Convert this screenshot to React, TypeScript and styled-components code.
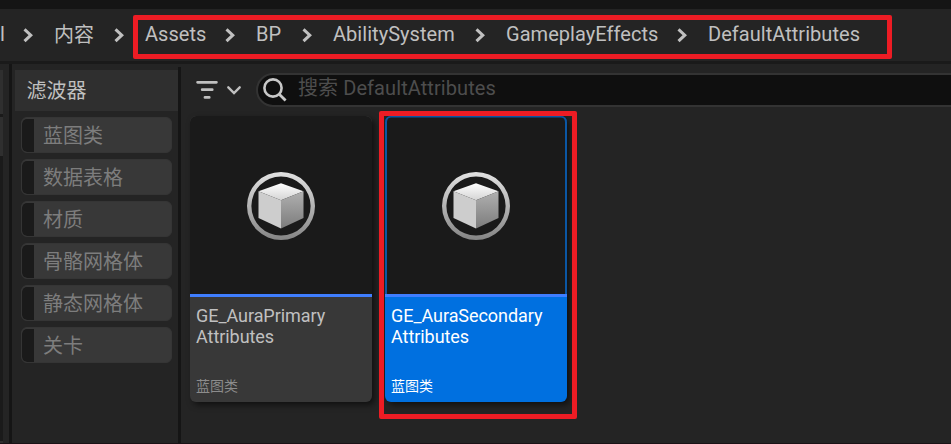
import React from "react";
import styled, { createGlobalStyle } from "styled-components";

const Global = createGlobalStyle`
  *, *::before, *::after { box-sizing: border-box; }
  html, body { margin: 0; background: #242424; overflow: hidden; }
  body { font-family: Roboto, "Noto Sans CJK SC", sans-serif; }
`;

const Window = styled.div`
  position: relative;
  width: 951px;
  height: 444px;
  display: flex;
  flex-direction: column;
  background: #242424;
  color: #c0c0c0;
  border-bottom: 1px solid #1a1216;
  overflow: hidden;
`;

const TitleStrip = styled.div`
  height: 9px;
  flex: none;
  background: #151515;
`;

const Breadcrumbs = styled.nav`
  height: 55px;
  flex: none;
  display: flex;
  align-items: flex-start;
  padding-top: 10px;
  border-bottom: 3px solid #1a1a1a;
  font-size: 20px;
  line-height: 30px;
  white-space: nowrap;
`;

const Crumb = styled.span<{ $w: number; $cjk?: boolean }>`
  flex: none;
  width: ${(p) => p.$w}px;
  padding-top: ${(p) => (p.$cjk ? 1 : 0)}px;
  letter-spacing: ${(p) => (p.$cjk ? 0 : 0.04)}px;
`;

const ChevronBox = styled.svg<{ $gap: number }>`
  flex: none;
  width: 11px;
  height: 15px;
  margin: 9px ${(p) => p.$gap}px 0 0;
  fill: none;
  stroke: #c0c0c0;
  stroke-width: 3;
`;

const Chevron = ({ gap }: { gap: number }) => (
  <ChevronBox viewBox="0 0 11 15" $gap={gap}>
    <path d="M1.5 1.3L7.8 7.2L1.5 13.2" />
  </ChevronBox>
);

const Body = styled.div`
  flex: 1;
  display: flex;
  min-height: 0;
`;

const NeighborPanel = styled.div`
  width: 3px;
  flex: none;
  margin-right: 6px;
  display: flex;
  flex-direction: column;
  background: #1a1a1a;
  border-top: 6px solid #242424;
  border-bottom: 2px solid #2f2f2f;
`;

const NeighborRow = styled.div<{ $h: number }>`
  height: ${(p) => p.$h}px;
  margin-bottom: 3px;
  background: #2f2f2f;
`;

const Divider = styled.div<{ $top?: number }>`
  width: 3px;
  flex: none;
  margin-top: ${(p) => p.$top ?? 0}px;
  background: #151515;
`;

const Filters = styled.aside`
  width: 166px;
  flex: none;
  padding: 6px 0 0 3px;
`;

const FiltersTitle = styled.div`
  height: 41px;
  padding-left: 11.5px;
  background: #2f2f2f;
  font-size: 20px;
  line-height: 43px;
`;

const FilterList = styled.div`
  display: flex;
  flex-direction: column;
  gap: 6px;
  padding: 6px 6px 0;
`;

const FilterChip = styled.button`
  height: 36px;
  display: flex;
  padding: 0;
  border: 1px solid #353535;
  border-radius: 6px;
  background: #383838;
  color: #7d7d7d;
  font: inherit;
  font-size: 20px;
  line-height: 36px;
  text-align: left;
  overflow: hidden;
  &::before {
    content: "";
    width: 12px;
    height: 33px;
    flex: none;
    margin: 1px 9px 0 0;
    border-radius: 5px 0 0 5px;
    background: #1a1a1a;
  }
`;

const Content = styled.main`
  flex: 1;
  min-width: 0;
`;

const SearchBar = styled.div`
  display: flex;
  height: 43px;
  padding-top: 9px;
`;

const FilterIcon = styled.svg`
  width: 60px;
  height: 34px;
  margin-left: 15px;
  flex: none;
  fill: none;
  stroke: #c0c0c0;
  stroke-linecap: round;
`;

const SearchField = styled.div`
  flex: 1;
  height: 34px;
  margin-right: -20px;
  display: flex;
  border: 2px solid #333333;
  border-radius: 17px;
  background: #0f0f0f;
  color: #4d4d4d;
  font-size: 20px;
  letter-spacing: 0.08px;
  line-height: 27px;
  white-space: pre;
`;

const SearchIcon = styled.svg`
  width: 40px;
  height: 30px;
  flex: none;
  fill: none;
  stroke: #c8c8c8;
`;

const AssetGrid = styled.div`
  display: flex;
  gap: 13px;
  padding: 9px 0 0 9px;
`;

const AssetCard = styled.article<{ $selected?: boolean }>`
  width: 182px;
  height: 286px;
  display: flex;
  flex-direction: column;
  border-radius: 6px;
  overflow: hidden;
  background: ${(p) => (p.$selected ? "#0070e0" : "#383838")};
  color: ${(p) => (p.$selected ? "#ffffff" : "#c0c0c0")};
  box-shadow: 3px 3px 6px rgba(0, 0, 0, 0.55);
`;

const Thumbnail = styled.div<{ $selected?: boolean }>`
  height: 178px;
  flex: none;
  display: flex;
  justify-content: center;
  padding-top: 55px;
  background: #1a1a1a;
  border-radius: 6px 6px 0 0;
  box-shadow: ${(p) =>
    p.$selected ? "inset 2px 0 #0b57a4, inset -2px 0 #0b57a4, inset 0 1.5px #0b57a4" : "none"};
`;

const TypeBar = styled.div`
  height: 3px;
  flex: none;
  background: #3f7eff;
`;

const AssetInfo = styled.div`
  flex: 1;
  display: flex;
  flex-direction: column;
  justify-content: space-between;
  padding: 8px 6px 6px;
`;

const AssetName = styled.div`
  font-size: 18px;
  line-height: 21px;
  letter-spacing: -0.05px;
`;

const AssetType = styled.div<{ $selected?: boolean }>`
  font-size: 14px;
  line-height: 20px;
  color: ${(p) => (p.$selected ? "#ffffff" : "#8c8c8c")};
`;

const Highlight = styled.div<{ $x: number; $y: number; $w: number; $h: number }>`
  position: absolute;
  left: ${(p) => p.$x}px;
  top: ${(p) => p.$y}px;
  width: ${(p) => p.$w}px;
  height: ${(p) => p.$h}px;
  border: 5px solid #ed1c24;
  border-radius: 2px;
  pointer-events: none;
`;

const CubeIcon = ({ id }: { id: string }) => (
  <svg width="70" height="70" viewBox="0 0 70 70">
    <defs>
      <linearGradient id={`${id}-ring`} x1="0" y1="0" x2="0" y2="1">
        <stop offset="0" stopColor="#e2e2e2" />
        <stop offset="1" stopColor="#858585" />
      </linearGradient>
      <linearGradient id={`${id}-top`} x1="0" y1="0" x2="0" y2="1">
        <stop offset="0" stopColor="#ffffff" />
        <stop offset="1" stopColor="#d4d4d4" />
      </linearGradient>
      <linearGradient id={`${id}-side`} x1="0" y1="0" x2="0" y2="1">
        <stop offset="0" stopColor="#b0b0b0" />
        <stop offset="1" stopColor="#7c7c7c" />
      </linearGradient>
    </defs>
    <path
      fillRule="evenodd"
      fill={`url(#${id}-ring)`}
      d="M35 1a34 34 0 1 0 0 68a34 34 0 1 0 0-68zM35 5.4a29.6 29.6 0 1 1 0 59.2a29.6 29.6 0 1 1 0-59.2z"
    />
    <path fill={`url(#${id}-top)`} d="M35 12.3L57.5 20.3L35 29.2L12.5 20.3z" />
    <path fill="#cdcdcd" d="M12.5 20.3L35 29.2V57.6L12.5 47z" />
    <path fill={`url(#${id}-side)`} d="M57.5 20.3L35 29.2V57.6L57.5 47z" />
  </svg>
);

const filters = ["蓝图类", "数据表格", "材质", "骨骼网格体", "静态网格体", "关卡"];

const crumbs = [
  { label: "Assets", width: 80, gap: 20 },
  { label: "BP", width: 46, gap: 20 },
  { label: "AbilitySystem", width: 142, gap: 20 },
  { label: "GameplayEffects", width: 171, gap: 20 },
];

const assets = [
  { id: "primary", lines: ["GE_AuraPrimary", "Attributes"], selected: false },
  { id: "secondary", lines: ["GE_AuraSecondary", "Attributes"], selected: true },
];

export default function App() {
  return (
    <Window>
      <Global />
      <TitleStrip />
      <Breadcrumbs>
        <Crumb $w={23}>l</Crumb>
        <Chevron gap={20} />
        <Crumb $w={60} $cjk>
          内容
        </Crumb>
        <Chevron gap={20} />
        {crumbs.map((c) => (
          <React.Fragment key={c.label}>
            <Crumb $w={c.width}>{c.label}</Crumb>
            <Chevron gap={c.gap} />
          </React.Fragment>
        ))}
        <Crumb $w={160}>DefaultAttributes</Crumb>
      </Breadcrumbs>
      <Body>
        <NeighborPanel>
          <NeighborRow $h={44} />
          <NeighborRow $h={39} />
        </NeighborPanel>
        <Divider />
        <Filters>
          <FiltersTitle>滤波器</FiltersTitle>
          <FilterList>
            {filters.map((f) => (
              <FilterChip key={f}>{f}</FilterChip>
            ))}
          </FilterList>
        </Filters>
        <Divider $top={3} />
        <Content>
          <SearchBar>
            <FilterIcon viewBox="0 0 60 34">
              <path strokeWidth="2.8" d="M1.6 9.3H20.4M6.2 16.7H16.2M9 24.4H13.2" />
              <path strokeWidth="2.4" d="M32.3 14.3L38 20L43.7 14.3" />
            </FilterIcon>
            <SearchField>
              <SearchIcon viewBox="0 0 40 30">
                <circle cx="15" cy="13" r="8.6" strokeWidth="2.6" />
                <path strokeWidth="2.8" d="M21 19L27.6 25.5" />
              </SearchIcon>
              搜索 DefaultAttributes
            </SearchField>
          </SearchBar>
          <AssetGrid>
            {assets.map((a) => (
              <AssetCard key={a.id} $selected={a.selected}>
                <Thumbnail $selected={a.selected}>
                  <CubeIcon id={a.id} />
                </Thumbnail>
                <TypeBar />
                <AssetInfo>
                  <AssetName>
                    {a.lines[0]}
                    <br />
                    {a.lines[1]}
                  </AssetName>
                  <AssetType $selected={a.selected}>蓝图类</AssetType>
                </AssetInfo>
              </AssetCard>
            ))}
          </AssetGrid>
        </Content>
      </Body>
      <Highlight $x={133} $y={15} $w={759} $h={44} />
      <Highlight $x={379} $y={111} $w={198} $h={308} />
    </Window>
  );
}
